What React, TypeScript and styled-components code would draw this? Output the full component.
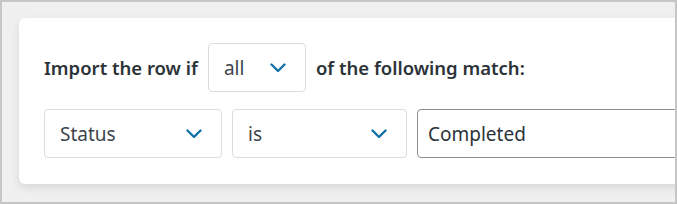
import React from 'react';
import styled, { createGlobalStyle } from 'styled-components';

const GlobalStyle = createGlobalStyle`
  html, body {
    margin: 0;
    padding: 0;
    background: #f0f0f1;
  }
  * {
    box-sizing: border-box;
  }
`;

const Frame = styled.div`
  width: 677px;
  height: 204px;
  padding: 16px 0 0 17px;
  border: 2px solid #c6c6c6;
  background: #f0f0f1;
  overflow: hidden;
  font-family: 'Noto Sans', 'Open Sans', sans-serif;
`;

const Card = styled.div`
  display: flex;
  flex-direction: column;
  gap: 17px;
  width: 720px;
  padding: 25px 25px 26px;
  background: #fff;
  border-radius: 6px;
  box-shadow: 0 4px 10px rgba(0, 0, 0, 0.1);
`;

const Row = styled.div`
  display: flex;
  align-items: center;
  gap: 10px;
`;

const Label = styled.span`
  color: #2c3338;
  font-size: 18.5px;
  font-weight: 600;
  white-space: nowrap;
`;

const SelectBox = styled.div<{ $width: number }>`
  display: flex;
  align-items: center;
  justify-content: space-between;
  width: ${(p) => p.$width}px;
  height: 49px;
  padding: 0 19px 0 15px;
  border: 1px solid #dcdcde;
  border-radius: 4px;
  color: #3c434a;
  font-size: 19px;
  flex-shrink: 0;
`;

const TextInput = styled.div`
  display: flex;
  align-items: center;
  width: 300px;
  height: 49px;
  padding: 0 10px;
  border: 1px solid #8c8f94;
  border-radius: 4px;
  color: #2c3338;
  font-size: 19px;
  flex-shrink: 0;
`;

function Chevron() {
  return (
    <svg width="16" height="10" viewBox="0 0 16 10" fill="none">
      <path d="M1.5 1.5 L8 8 L14.5 1.5" stroke="#1471a8" strokeWidth="2.4" strokeLinecap="round" strokeLinejoin="round" />
    </svg>
  );
}

function Select({ value, width }: { value: string; width: number }) {
  return (
    <SelectBox $width={width}>
      <span>{value}</span>
      <Chevron />
    </SelectBox>
  );
}

export default function App() {
  return (
    <>
      <GlobalStyle />
      <Frame>
        <Card>
          <Row>
            <Label>Import the row if</Label>
            <Select value="all" width={98} />
            <Label>of the following match:</Label>
          </Row>
          <Row>
            <Select value="Status" width={178} />
            <Select value="is" width={175} />
            <TextInput>Completed</TextInput>
          </Row>
        </Card>
      </Frame>
    </>
  );
}
